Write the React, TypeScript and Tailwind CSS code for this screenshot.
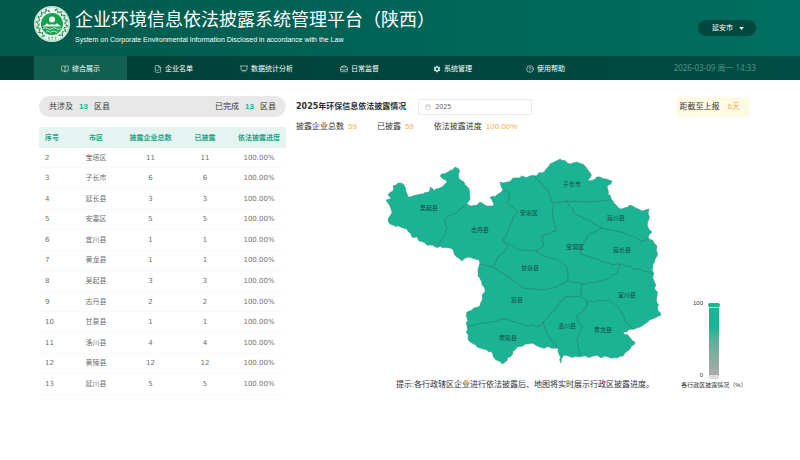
import { useState } from 'react';
import type { ComponentType } from 'react';
import { BookOpen, FileCheck, Presentation, BriefcaseBusiness, CircleQuestionMark, Calendar } from 'lucide-react';
import { IoMdSettings } from 'react-icons/io';

type Point = [number, number];

interface NavItem {
  label: string;
  icon: ComponentType<{ size?: number; className?: string }>;
}

interface Region {
  no: number;
  name: string;
  total: number;
  done: number;
}

const NAV: NavItem[] = [
  { label: '综合展示', icon: BookOpen },
  { label: '企业名单', icon: FileCheck },
  { label: '数据统计分析', icon: Presentation },
  { label: '日常监督', icon: BriefcaseBusiness },
  { label: '系统管理', icon: IoMdSettings },
  { label: '使用帮助', icon: CircleQuestionMark },
];

const ROWS: Region[] = [
  { no: 2, name: '宝塔区', total: 11, done: 11 },
  { no: 3, name: '子长市', total: 6, done: 6 },
  { no: 4, name: '延长县', total: 3, done: 3 },
  { no: 5, name: '安塞区', total: 5, done: 5 },
  { no: 6, name: '宜川县', total: 1, done: 1 },
  { no: 7, name: '黄龙县', total: 1, done: 1 },
  { no: 8, name: '吴起县', total: 3, done: 3 },
  { no: 9, name: '志丹县', total: 2, done: 2 },
  { no: 10, name: '甘泉县', total: 1, done: 1 },
  { no: 11, name: '洛川县', total: 4, done: 4 },
  { no: 12, name: '黄陵县', total: 12, done: 12 },
  { no: 13, name: '延川县', total: 5, done: 5 },
];

// 市域轮廓
const OUTLINE: Point[] = [
  [388, 222], [392, 213], [390, 207], [386, 201], [391, 199], [388, 196], [393, 192], [393, 187], [398, 184], [404, 186],
  [407, 195], [408, 198], [417, 196], [429, 193], [430, 188], [434, 192], [442, 188], [447, 183], [440, 177], [448, 173],
  [455, 168], [459, 170], [459, 180], [464, 183], [469, 190], [470, 200], [465, 206], [477, 206], [480, 203], [487, 207],
  [494, 206], [490, 199], [500, 194], [503, 191], [500, 183], [508, 183], [513, 179], [530, 177], [535, 177], [545, 172],
  [550, 165], [560, 160], [570, 165], [577, 163], [585, 167], [591, 175], [588, 182], [600, 178], [612, 182], [607, 188],
  [611, 200], [617, 207], [622, 210], [630, 206], [642, 212], [649, 210], [648, 228], [652, 233], [648, 238], [657, 247],
  [657, 257], [653, 265], [653, 277], [657, 297], [658, 312], [661, 316], [652, 320], [640, 328], [623, 333], [635, 343],
  [630, 350], [623, 357], [617, 359], [593, 357], [580, 358], [563, 357], [561, 364], [559, 355], [558, 349], [540, 348],
  [532, 344], [517, 348], [510, 358], [502, 365], [495, 360], [492, 353], [477, 348], [468, 340], [467, 327], [467, 313],
  [480, 307], [485, 290], [478, 277], [479, 267], [479, 261], [468, 258], [462, 262], [457, 258], [452, 250], [440, 247],
  [435, 248], [419, 242], [417, 238], [412, 238], [407, 230], [390, 225],
];

// 区县分界
const BORDERS: Point[][] = [
  [[465, 206], [458, 213], [447, 218], [445, 220], [447, 230], [442, 240], [438, 247]],
  [[503, 190], [510, 195], [507, 203], [518, 213], [513, 218], [508, 232], [503, 242], [508, 248], [497, 260], [493, 268]],
  [[503, 242], [520, 251], [536, 252]],
  [[534, 177], [548, 192], [553, 205], [553, 218], [556, 232], [542, 237], [544, 247], [536, 252]],
  [[553, 204], [567, 202], [587, 203], [611, 201]],
  [[567, 202], [575, 215], [590, 222], [602, 229], [620, 233], [633, 237], [641, 243], [649, 239]],
  [[602, 229], [590, 235], [582, 245], [580, 255], [597, 260], [612, 266], [620, 265], [637, 270], [653, 275]],
  [[620, 265], [618, 273], [603, 282], [582, 285], [567, 282]],
  [[536, 252], [545, 258], [557, 260], [567, 268], [568, 277], [567, 282]],
  [[480, 265], [493, 268], [507, 277], [523, 289], [543, 291], [557, 288], [567, 282]],
  [[582, 285], [581, 297]],
  [[543, 323], [553, 313], [565, 298], [581, 297], [587, 303]],
  [[587, 303], [610, 301], [620, 310], [627, 325], [633, 330]],
  [[587, 303], [585, 310], [577, 317], [579, 324], [583, 327], [577, 340], [580, 357]],
  [[468, 327], [490, 323], [505, 320], [525, 326], [540, 327], [543, 323], [547, 335], [557, 348]],
];

const LABELS: { name: string; x: number; y: number }[] = [
  { name: '子长市', x: 572, y: 187 },
  { name: '吴起县', x: 429, y: 211 },
  { name: '安塞区', x: 529, y: 216 },
  { name: '延川县', x: 616, y: 221 },
  { name: '志丹县', x: 480, y: 233 },
  { name: '宝塔区', x: 575, y: 250 },
  { name: '延长县', x: 622, y: 253 },
  { name: '甘泉县', x: 530, y: 271 },
  { name: '宜川县', x: 627, y: 298 },
  { name: '富县', x: 517, y: 303 },
  { name: '洛川县', x: 567, y: 329 },
  { name: '黄龙县', x: 603, y: 333 },
  { name: '黄陵县', x: 508, y: 341 },
];

// 在相邻两点间插入细小起伏，使边界更自然
function roughen(points: Point[], amount: number, closed = false) {
  const out: Point[] = [];
  const count = closed ? points.length : points.length - 1;
  for (let i = 0; i < count; i++) {
    const [x1, y1] = points[i];
    const [x2, y2] = points[(i + 1) % points.length];
    const len = Math.hypot(x2 - x1, y2 - y1) || 1;
    const steps = Math.max(1, Math.round(len / 3));
    for (let s = 0; s < steps; s++) {
      const t = (s + (s ? Math.sin(x1 + s * 5) * 0.3 : 0)) / steps;
      const off = s === 0 ? 0 : (Math.sin((x1 + y1) * 7 + s * 1.7) + Math.sin(x1 * 3 + s * 4.1)) * 0.6 * amount;
      out.push([x1 + (x2 - x1) * t - ((y2 - y1) / len) * off, y1 + (y2 - y1) * t + ((x2 - x1) / len) * off]);
    }
  }
  if (!closed) out.push(points[points.length - 1]);
  return 'M' + out.map(([x, y]) => `${x.toFixed(1)} ${y.toFixed(1)}`).join('L') + (closed ? 'Z' : '');
}

function Logo() {
  const leaves = [-140, -120, -100, -80, -60, -40, -20, 20, 40, 60, 80, 100, 120, 140];
  return (
    <svg viewBox="-18 -18 36 36" className="mb-2 size-9 shrink-0" aria-hidden="true">
      <circle r="18" fill="#e9f8ee" />
      <circle r="17" fill="none" stroke="#6dbb8a" strokeWidth="0.5" />
      {leaves.map((a) => (
        <g key={a} transform={`rotate(${a})`}>
          <ellipse cx="-1" cy="-14.8" rx="0.8" ry="1.7" fill="#23894f" transform="rotate(40 -1 -14.8)" />
          <ellipse cx="1.4" cy="-13.4" rx="0.7" ry="1.5" fill="#23894f" transform="rotate(-40 1.4 -13.4)" />
        </g>
      ))}
      <path d="M-4 14.2h2M-3 13v3M-1 13.2h2.2M0 12.8v3.4M2.6 13.2h2M3.6 13v3" stroke="#5fae7d" strokeWidth="0.7" />
      <circle r="11" fill="#16a050" />
      <circle cy="-4.6" r="3" fill="#f4fff7" />
      <path d="M-9.5 2.6L-7 1l2-1.8 2 1.6L0 .2l3 .6L5-.8 7 1l2.5 1.6z" fill="#f4fff7" />
      <path d="M-9 4.6q2.2-1.6 4.5 0t4.5 0 4.5 0 4.5 0M-6 7.6q1.5-1.4 3 0t3 0 3 0 3 0" fill="none" stroke="#d8f5e1" strokeWidth="0.9" />
    </svg>
  );
}

function RegionMap() {
  return (
    <svg viewBox="380 154 290 218" className="w-[290px] max-w-full font-['Liberation_Sans','Noto_Sans_CJK_SC',sans-serif]" role="img" aria-label="延安市">
      <path d={roughen(OUTLINE, 1, true)} fill="#1ab394" stroke="#3f9c84" strokeWidth="0.6" strokeLinejoin="round" />
      {BORDERS.map((line, i) => (
        <path key={i} d={roughen(line, 0.7)} fill="none" stroke="#2a7f70" strokeWidth="0.7" />
      ))}
      {LABELS.map((l) => (
        <text key={l.name} x={l.x} y={l.y} textAnchor="middle" fontSize="6" fill="#17493f">{l.name}</text>
      ))}
    </svg>
  );
}

function Header() {
  const [city, setCity] = useState('延安市');
  return (
    <header className="bg-linear-to-r from-[#005a4c] via-[#006458] to-[#006e62] text-white">
      <div className="flex h-14 items-center justify-between pr-11 pl-[34px]">
        <div className="flex items-center gap-[5px]">
          <Logo />
          <div>
            <h1 className="text-[18px] leading-6">企业环境信息依法披露系统管理平台（陕西）</h1>
            <p className="text-[7px] leading-4">System on Corporate Environmental Information Disclosed in accordance with the Law</p>
          </div>
        </div>
        <div className="relative flex">
          <select
            aria-label="城市"
            value={city}
            onChange={(e) => setCity(e.target.value)}
            className="h-4 w-[58px] appearance-none rounded-full bg-[#00493f] pl-3.5 text-[7px] text-white outline-none"
          >
            <option>延安市</option>
          </select>
          <svg viewBox="0 0 6 4" className="pointer-events-none absolute top-[7px] right-3 h-[3px] w-[5px]" aria-hidden="true">
            <path d="M0 0h6L3 4z" fill="#fff" />
          </svg>
        </div>
      </div>
      <div className="flex h-6 items-center justify-between bg-black/30 pr-11 pl-[34px]">
        <nav className="flex h-full">
          {NAV.map(({ label, icon: Icon }, i) => (
            <a
              key={label}
              href="#"
              className={`flex w-[93px] items-center justify-center gap-[3px] pt-0.5 text-[7px] ${i === 0 ? 'bg-[#10604f]' : ''}`}
            >
              <Icon size={8} className="text-[#cfe6e0]" />
              {label}
            </a>
          ))}
        </nav>
        <time className="text-[8px] text-[#4f9484] font-['Noto_Sans','Noto_Sans_CJK_SC',sans-serif]">2026-03-09 周一 14:33</time>
      </div>
    </header>
  );
}

export default function App() {
  const [year, setYear] = useState('2025');

  return (
    <div className="min-h-screen bg-white text-[#333] font-['Liberation_Sans','Noto_Sans_CJK_SC',sans-serif]">
      <Header />

      <main className="flex items-start gap-[10px] pr-[50px] pl-[39px]">
        {/* 左侧：区县统计 */}
        <section className="w-[247px] shrink-0 pt-4">
          <div className="flex h-[21px] items-center justify-between rounded-full bg-[#e8e8e8] px-[10px] text-[8px]">
            <span>共涉及<b className="mx-1.5 text-[#1ab394]">13</b>区县</span>
            <span>已完成<b className="mx-1.5 text-[#1ab394]">13</b>区县</span>
          </div>
          <table className="mt-2.5 h-[268px] w-full table-fixed text-center text-[7px] leading-3 text-[#707070] font-['DejaVu_Sans','Noto_Sans_CJK_SC',sans-serif]">
            <thead>
              <tr className="h-[21px] bg-[#e5f4f0] text-[#1aa386]">
                <th className="w-[30px] pl-1.5 text-left">序号</th>
                <th className="w-[54px]">市区</th>
                <th className="w-[55px]">披露企业总数</th>
                <th className="w-[54px]">已披露</th>
                <th>依法披露进度</th>
              </tr>
            </thead>
            <tbody>
              {ROWS.map((r) => (
                <tr key={r.no} className="border-b border-[#f9fbfb]">
                  <td className="pl-1.5 text-left">{r.no}</td>
                  <td>{r.name}</td>
                  <td>{r.total}</td>
                  <td>{r.done}</td>
                  <td>100.00%</td>
                </tr>
              ))}
            </tbody>
          </table>
        </section>

        {/* 右侧：年度披露情况 + 地图 */}
        <section className="min-w-0 flex-1 pt-4">
          <div className="flex h-[21px] items-center justify-between">
            <div className="flex items-center gap-3">
              <label htmlFor="year" className="text-[8px] font-bold font-['DejaVu_Sans','Noto_Sans_CJK_SC',sans-serif]">2025年环保信息依法披露情况</label>
              <div className="flex h-4 w-[114px] items-center gap-1 rounded-xs border border-[#e8eaee] px-1.5">
                <Calendar size={6} className="shrink-0 text-[#b8bcc4]" />
                <input id="year" value={year} onChange={(e) => setYear(e.target.value)} className="h-3 w-full min-w-0 text-[7px] leading-3 text-[#666] outline-none font-['Noto_Sans',sans-serif]" />
              </div>
            </div>
            <div className="flex h-5 items-center gap-2 rounded bg-[#fefae4] px-1 text-[8px]">
              距截至上报<span className="pr-1.5 text-[#f5b04c]">6天</span>
            </div>
          </div>
          <div className="flex gap-5 pt-1 text-[8px] leading-3">
            <span>披露企业总数<span className="ml-1 text-[#f5b04c]">59</span></span>
            <span>已披露<span className="ml-1 text-[#f5b04c]">59</span></span>
            <span>依法披露进度<span className="ml-1 text-[#f5b04c]">100.00%</span></span>
          </div>

          <div className="flex items-end justify-between pt-5">
            <div className="flex flex-1 flex-col items-center pl-[76px]">
              <RegionMap />
              <p className="pt-1.5 text-[8px] leading-4 whitespace-nowrap">提示:各行政辖区企业进行依法披露后、地图将实时展示行政区披露进度。</p>
            </div>
            <div className="flex w-[72px] shrink-0 flex-col items-center gap-0.5 pb-1 text-[6px] leading-2 whitespace-nowrap">
              <div className="flex gap-1.5">
                <div className="-mt-1 flex w-3 flex-col items-end justify-between"><span>100</span><span>0</span></div>
                <div className="mr-[18px] w-[10px]">
                  <div className="mx-[-1px] h-1 rounded-xs bg-[#1ab394]" />
                  <div className="h-[68px] border-t border-[#a5dfd1] bg-linear-to-b from-[#1ab394] from-30% to-[#aaa]" />
                  <div className="h-1 rounded-b-xs bg-[#ddd]" />
                </div>
              </div>
              <span>各行政区披露情况（%）</span>
            </div>
          </div>
        </section>
      </main>
    </div>
  );
}
